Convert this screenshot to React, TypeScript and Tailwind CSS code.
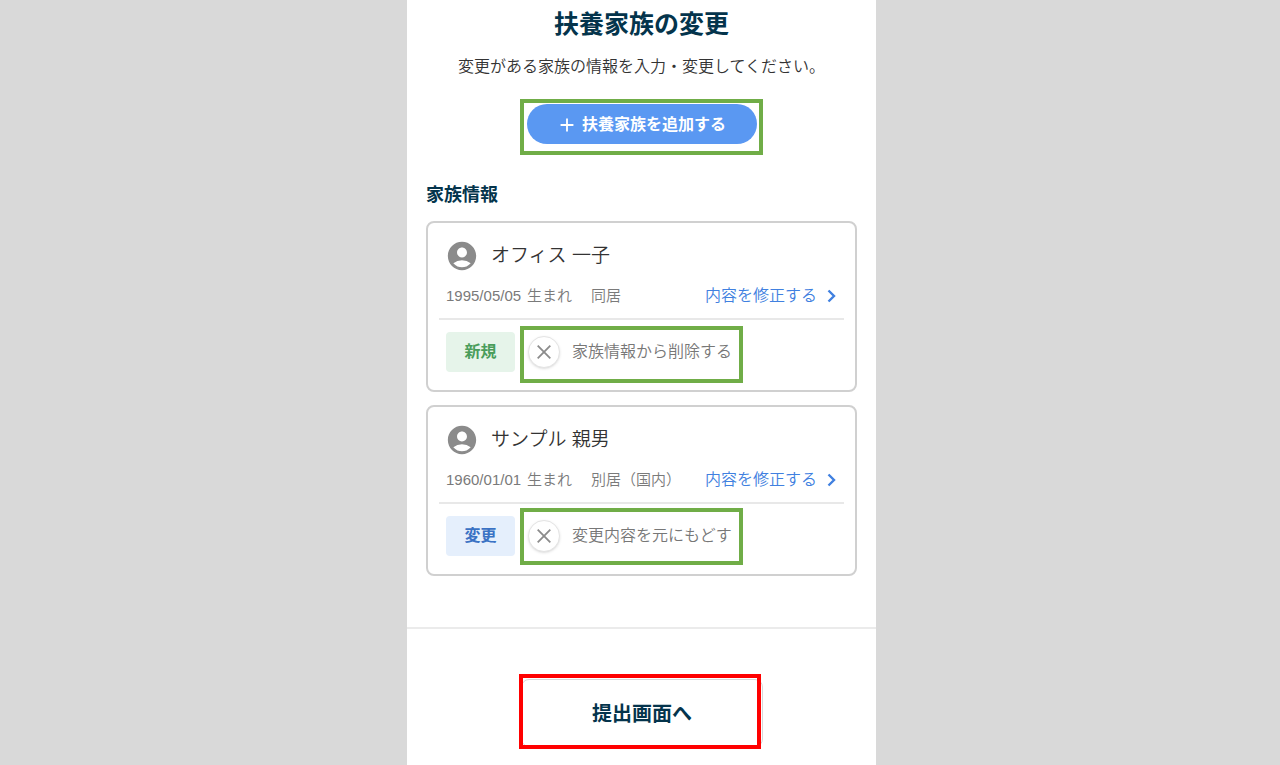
import clsx from 'clsx';
import { MdAccountCircle, MdAdd } from 'react-icons/md';

type Status = 'new' | 'changed';

type FamilyMember = {
  name: string;
  birthday: string;
  living: string;
  status: Status;
  action: string;
};

const FAMILY: FamilyMember[] = [
  { name: 'オフィス 一子', birthday: '1995/05/05', living: '同居', status: 'new', action: '家族情報から削除する' },
  { name: 'サンプル 親男', birthday: '1960/01/01', living: '別居（国内）', status: 'changed', action: '変更内容を元にもどす' },
];

const STATUS: Record<Status, { label: string; badge: string; frame: string }> = {
  new:     { label: '新規', badge: 'bg-[#e6f4ea] text-[#4a9d5b]', frame: '-top-[10px] -bottom-[15px]' },
  changed: { label: '変更', badge: 'bg-[#e5effc] text-[#3a72c4]', frame: '-top-[12px] -bottom-[13px]' },
};

export default function App() {
  return (
    <div className="flex min-h-screen justify-center bg-[#d9d9d9] pl-[3px] font-['Liberation_Sans','Noto_Sans_CJK_JP',sans-serif]">
      <main className="flex w-full max-w-[469px] flex-col bg-white">
        <div className="px-[19px] pb-[51px]">
          <h1 className="text-center text-[25px] leading-[48px] font-bold text-[#04344c]">扶養家族の変更</h1>
          <p className="mt-[7px] text-center text-base leading-6 font-[350] text-[#333]">
            変更がある家族の情報を入力・変更してください。
          </p>

          <div className="mt-5 flex justify-center">
            <div className="border-4 border-[#70ad47] pt-px pr-[2px] pb-[7px] pl-[3px]">
              <button
                type="button"
                className="flex h-10 w-[230px] items-center justify-center gap-1 rounded-full bg-[#5a98f2] pt-px pr-[2px] text-base font-bold text-white"
              >
                <MdAdd className="size-[22px]" />
                扶養家族を追加する
              </button>
            </div>
          </div>

          <h2 className="mt-7 text-[18px] leading-6 font-bold text-[#04344c]">家族情報</h2>
          <ul className="mt-[14px] space-y-[13px]">
            {FAMILY.map(m => (
              <MemberCard key={m.name} member={m} />
            ))}
          </ul>
        </div>

        <footer className="flex flex-1 flex-col items-center border-t-2 border-[#ebebeb] pt-[45px] pr-[3px]">
          <div className="relative w-[242px]">
            <button
              type="button"
              className="mt-[5px] ml-[2px] h-[68px] w-[242px] rounded-lg border border-[#d8d8d8] bg-white pt-[2px] text-[20px] font-bold text-[#04344c]"
            >
              提出画面へ
            </button>
            <span className="pointer-events-none absolute inset-x-0 top-0 h-[75px] border-4 border-[#ff0000]" />
          </div>
        </footer>
      </main>
    </div>
  );
}

function MemberCard({ member }: { member: FamilyMember }) {
  const s = STATUS[member.status];
  return (
    <li className="rounded-lg border-2 border-[#d0d0d0] px-[11px] pt-4 pb-[18px]">
      <div className="flex h-[34px] items-center gap-3 pl-[6px]">
        <MdAccountCircle className="size-[34px] text-[#8b8b8b]" />
        <h3 className="text-[19px] leading-6 font-[350] text-[#333]">{member.name}</h3>
      </div>

      <div className="mt-[11px] flex h-6 items-center pl-[7px] text-[15px] leading-6 font-[350] text-[#7a7a7a]">
        <span>{member.birthday}</span>
        <span className="ml-[6px]">生まれ</span>
        <span className="ml-[19px]">{member.living}</span>
        <a href="#edit" className="mr-2 ml-auto flex items-center gap-[10px] text-base leading-6 text-[#4080e0]">
          内容を修正する
          <svg viewBox="0 0 9 14" className="h-[14px] w-[9px]" fill="none" stroke="currentColor" strokeWidth="2.4">
            <path d="M1.5 1.5 7 7l-5.5 5.5" />
          </svg>
        </a>
      </div>

      <div className="mt-[10px] flex items-center border-t-2 border-[#e8e8e8] pt-3 pl-[7px]">
        <span className={clsx('flex h-10 w-[69px] items-center justify-center rounded text-base font-bold', s.badge)}>
          {s.label}
        </span>
        <button type="button" className="relative ml-[13px] flex h-8 items-center gap-3 text-base font-[350] text-[#777]">
          <span className="flex size-8 items-center justify-center rounded-full border border-[#e4e4e4] bg-white shadow">
            <svg viewBox="0 0 14 14" className="size-[14px] text-[#8b8b8b]" fill="none" stroke="currentColor" strokeWidth="1.8">
              <path d="M.7.7l12.6 12.6M13.3.7.7 13.3" />
            </svg>
          </span>
          {member.action}
          <span className={clsx('pointer-events-none absolute -right-[11px] -left-2 border-4 border-[#70ad47]', s.frame)} />
        </button>
      </div>
    </li>
  );
}
